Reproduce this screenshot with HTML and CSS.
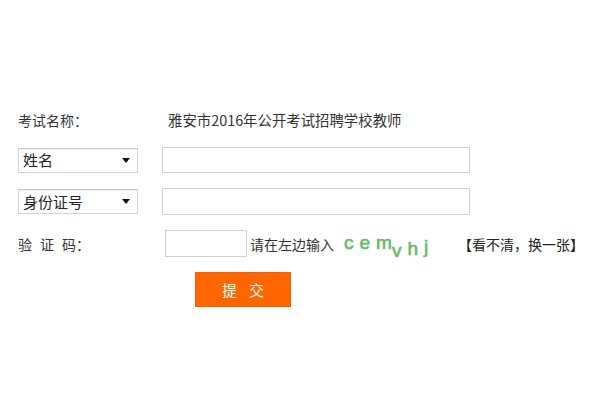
FILE: index.html
```html
<!DOCTYPE html>
<html lang="zh-CN">
<head>
<meta charset="utf-8">
<title>考试报名查询</title>
<link rel="stylesheet" href="styles.css">
</head>
<body>
<div class="form">
  <div class="row row-title">
    <div class="label">考试名称：</div>
    <div class="title">雅安市2016年公开考试招聘学校教师</div>
  </div>
  <div class="row row-field">
    <div class="label">
      <div class="select"><span>姓名</span><svg class="arrow" width="8" height="5" viewBox="0 0 8 5"><path d="M0 0H8L4 5Z" fill="#111"/></svg></div>
    </div>
    <div class="input"></div>
  </div>
  <div class="row row-field2">
    <div class="label">
      <div class="select"><span>身份证号</span><svg class="arrow" width="8" height="5" viewBox="0 0 8 5"><path d="M0 0H8L4 5Z" fill="#111"/></svg></div>
    </div>
    <div class="input input2"></div>
  </div>
  <div class="row row-code">
    <div class="label code-label"><span class="ch">验</span><span class="ch">证</span><span>码：</span></div>
    <div class="code-input"></div>
    <div class="hint">请在左边输入</div>
    <div class="captcha"><span class="c1">c</span><span class="c2">e</span><span class="c3">m</span><span class="c4">v</span><span class="c5">h</span><span class="c6">j</span></div>
    <div class="refresh">【看不清，换一张】</div>
  </div>
  <div class="row row-btn">
    <div class="btn">提交</div>
  </div>
</div>
</body>
</html>
```

FILE: styles.css
```css
html, body {
  margin: 0;
  padding: 0;
  background: #fff;
}
body {
  width: 600px;
  height: 400px;
  overflow: hidden;
  font-family: "Noto Sans CJK SC", "Liberation Sans", sans-serif;
  font-size: 14px;
  color: #333;
}
.form {
  display: flex;
  flex-direction: column;
  gap: 15px;
  padding: 108px 0 0 18px;
}
.row {
  display: flex;
  align-items: center;
}
.label {
  width: 144px;
  flex: none;
  line-height: 20px;
}
.row-title {
  height: 24px;
}
.title {
  padding-left: 6px;
  font-size: 14.4px;
  line-height: 20px;
  color: #333;
}
.row-field {
  height: 26px;
}
.row-field2 {
  height: 27px;
}
.select {
  height: 23px;
  border: 1px solid #d4d4d4;
  border-top-color: #c4c4c4;
  box-shadow: inset 0 1px 1px rgba(0,0,0,0.06);
  background: #fff;
  display: flex;
  align-items: center;
  justify-content: space-between;
  padding: 0 7px 0 4px;
  box-sizing: content-box;
  width: 107px;
  font-size: 15px;
  color: #222;
  line-height: 20px;
}
.arrow {
  display: block;
}
.input {
  width: 306px;
  height: 24px;
  border: 1px solid #cfcfcf;
  background: #fff;
}
.input2 {
  height: 25px;
}
.row-code {
  height: 27px;
}
.code-label {
  width: 147px;
}
.code-label .ch {
  margin-right: 8px;
}
.code-input {
  width: 80px;
  height: 25px;
  border: 1px solid #cfcfcf;
  background: #fff;
  flex: none;
}
.hint {
  margin-left: 3px;
  line-height: 20px;
}
.captcha {
  width: 114px;
  margin-left: 10px;
  font-family: "Liberation Sans", sans-serif;
  font-size: 19px;
  font-weight: normal;
  -webkit-text-stroke: 0.6px #66bb66;
  color: #66bb66;
  line-height: 20px;
  white-space: nowrap;
}
.captcha span {
  display: inline-block;
  margin-right: 6px;
}
.c1 { position: relative; top: -1px; }
.c2 { position: relative; top: -1px; }
.c3 { margin-right: 0 !important; position: relative; top: -1px; }
.c4 { position: relative; top: 7px; }
.c5 { position: relative; top: 5px; }
.c6 { position: relative; top: 3px; }
.refresh {
  line-height: 20px;
  color: #222;
}
.row-btn {
  height: 35px;
}
.btn {
  margin-left: 177px;
  width: 94px;
  height: 33px;
  background: #ff6600;
  border: 1px solid #f06000;
  color: #fff;
  font-size: 15px;
  line-height: 33px;
  text-align: center;
  letter-spacing: 12px;
  text-indent: 12px;
}
```
